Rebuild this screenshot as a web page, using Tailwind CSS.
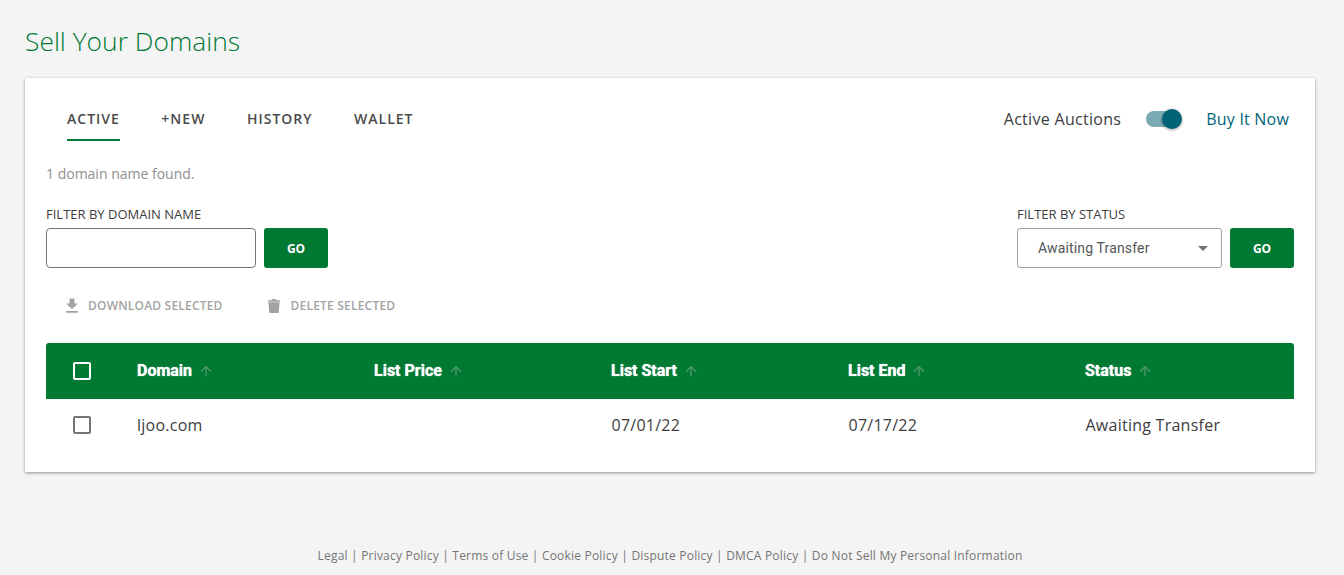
<!DOCTYPE html>
<html lang="en">
<head>
    <meta charset="UTF-8">
    <meta name="viewport" content="width=device-width, initial-scale=1.0">
    <title>Sell Your Domains</title>
    <script src="https://cdn.jsdelivr.net/npm/@tailwindcss/browser@4"></script>
</head>
<body class="bg-[#f4f4f4] font-['Open_Sans',sans-serif] h-[575px] overflow-hidden">
    <div class="pl-[25px] pr-[29px]">
        <h1 class="pt-[22px] h-[78px] text-[26.4px] leading-[38px] font-light text-[#007a33]">Sell Your Domains</h1>

        <div class="bg-white h-[394px] px-[21px] shadow-[0_1px_3px_rgba(0,0,0,0.4)]">
            <!--tabs and auction switch-->
            <div class="flex justify-between h-[63px] pt-[21px]">
                <div class="flex gap-[41.500px] pl-[21px] text-[14px] font-semibold tracking-[1px] text-[#4a4a4a]">
                    <div class="h-[42px] pt-[10px] leading-[19px] border-b-2 border-[#007a33]">ACTIVE</div>
                    <div class="pt-[10px] leading-[19px]">+NEW</div>
                    <div class="pt-[10px] leading-[19px]">HISTORY</div>
                    <div class="pt-[10px] leading-[19px]">WALLET</div>
                </div>
                <div class="flex items-start pt-[9px] pr-[5px] text-[16px] leading-[22px] tracking-[0.3px]">
                    <span class="text-[#3d3d3d]">Active Auctions</span>
                    <span class="relative w-[36px] h-[16px] mt-[3px] ml-[25px] mr-[24px] ">
                        <span class="absolute left-0 top-0 w-[34px] h-[16px] rounded-full bg-[#7aabb5]"></span>
                        <span class="absolute left-[16px] top-[-2px] w-[20px] h-[20px] rounded-full bg-[#006478] shadow-[0_1px_3px_rgba(0,0,0,0.4)]"></span>
                    </span>
                    <span class="text-[#006478] tracking-[0.2px]">Buy It Now</span>
                </div>
            </div>

            <p class="mt-[23px] text-[14px] leading-[20px] text-[#8f8f8f]">1 domain name found.</p>

            <!--filters-->
            <div class="flex justify-between mt-[22px]">
                <div>
                    <label class="block text-[13px] leading-[16px] text-[#3d3d3d] mb-[6px]">FILTER BY DOMAIN NAME</label>
                    <div class="flex gap-2">
                        <input type="text" class="w-[210px] h-[40px] border border-[#767676] rounded-[4px] outline-none">
                        <button class="w-[64px] h-[40px] pt-[1px] bg-[#007a33] rounded-[3px] text-white text-[12px] font-bold">GO</button>
                    </div>
                </div>
                <div>
                    <label class="block text-[13px] leading-[16px] text-[#3d3d3d] mb-[6px]">FILTER BY STATUS</label>
                    <div class="flex gap-2">
                        <div class="w-[205px] h-[40px] border border-[#a0a0a0] rounded-[3px] flex items-center justify-between pl-[20px] pr-[13px] font-['Roboto',sans-serif] text-[14px] tracking-[0.15px] text-[#555]">
                            <span>Awaiting Transfer</span>
                            <span class="w-0 h-0 border-x-[5px] border-x-transparent border-t-[5px] border-t-[#757575]"></span>
                        </div>
                        <button class="w-[64px] h-[40px] pt-[1px] bg-[#007a33] rounded-[3px] text-white text-[12px] font-bold">GO</button>
                    </div>
                </div>
            </div>

            <!--bulk actions-->
            <div class="flex items-center h-[36px] mt-[20px] pl-[16px] text-[12px] font-semibold tracking-[0.2px] text-[#a3a3a3]">
                <svg class="w-[20px] h-[20px] mr-[6px]" viewBox="0 0 24 24" fill="#a3a3a3"><path d="M19 9h-4V3H9v6H5l7 7 7-7zM5 18v2h14v-2H5z"/></svg>
                <span>DOWNLOAD SELECTED</span>
                <svg class="w-[16px] h-[16px] ml-[43px] mr-[9px]" viewBox="0 0 16 16" fill="#a3a3a3"><path d="M2 2.200h3.500L6.300 1h3.400l.8 1.200H14v1.600H2zM2.400 4.300h11.200l-.9 10.700H3.300z"/></svg>
                <span>DELETE SELECTED</span>
            </div>

            <!--table-->
            <div class="mt-[19px]">
                <div class="grid grid-cols-[91px_237px_237px_237px_237px_1fr] items-center h-[56px] bg-[#007a33] rounded-t-[3px] text-white font-['Roboto',sans-serif] text-[16px] font-bold [text-shadow:0_0_1px_white]">
                    <span class="ml-[27px] w-[18px] h-[18px] border-2 border-white rounded-[2px]"></span>
                    <div class="flex items-center gap-[6px]">Domain <svg class="w-[16px] h-[16px]" viewBox="0 0 24 24" fill="#4f9a6d"><path d="M4 12l1.410 1.410L11 7.830V20h2V7.830l5.580 5.590L20 12l-8-8-8 8z"/></svg></div>
                    <div class="flex items-center gap-[6px]">List Price <svg class="w-[16px] h-[16px]" viewBox="0 0 24 24" fill="#4f9a6d"><path d="M4 12l1.410 1.410L11 7.830V20h2V7.830l5.580 5.590L20 12l-8-8-8 8z"/></svg></div>
                    <div class="flex items-center gap-[6px]">List Start <svg class="w-[16px] h-[16px]" viewBox="0 0 24 24" fill="#4f9a6d"><path d="M4 12l1.410 1.410L11 7.830V20h2V7.830l5.580 5.590L20 12l-8-8-8 8z"/></svg></div>
                    <div class="flex items-center gap-[6px]">List End <svg class="w-[16px] h-[16px]" viewBox="0 0 24 24" fill="#4f9a6d"><path d="M4 12l1.410 1.410L11 7.830V20h2V7.830l5.580 5.590L20 12l-8-8-8 8z"/></svg></div>
                    <div class="flex items-center gap-[6px]">Status <svg class="w-[16px] h-[16px]" viewBox="0 0 24 24" fill="#4f9a6d"><path d="M4 12l1.410 1.410L11 7.830V20h2V7.830l5.580 5.590L20 12l-8-8-8 8z"/></svg></div>
                </div>
                <div class="grid grid-cols-[91px_237px_237px_237px_237px_1fr] items-center h-[52px] text-[16px] tracking-[0.25px] text-[#3d3d3d]">
                    <span class="ml-[27px] w-[18px] h-[18px] border-2 border-[#757575] rounded-[2px]"></span>
                    <span>ljoo.com</span>
                    <span></span>
                    <span class="pl-[0.5px]">07/01/22</span>
                    <span class="pl-[0.5px]">07/17/22</span>
                    <span class="pl-[0.5px]">Awaiting Transfer</span>
                </div>
            </div>
        </div>

        <footer class="mt-[76px] text-center text-[12px] leading-[16px] tracking-[0.2px] text-[#757575]">Legal | Privacy Policy | Terms of Use | Cookie Policy | Dispute Policy | DMCA Policy | Do Not Sell My Personal Information</footer>
    </div>
</body>
</html>
